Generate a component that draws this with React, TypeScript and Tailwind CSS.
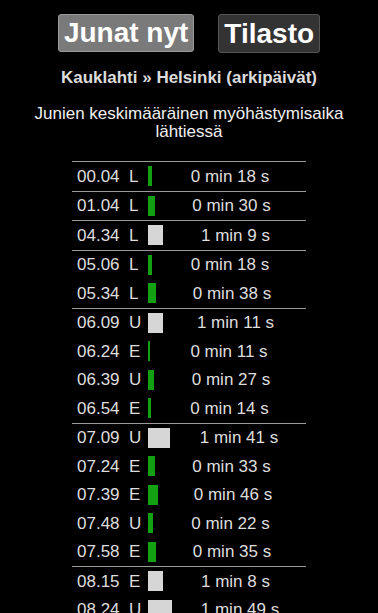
import React from "react";

type Row = { time: string; kind: string; sec: number };

const rows: Row[] = [
  { time: "00.04", kind: "L", sec: 18 },
  { time: "01.04", kind: "L", sec: 30 },
  { time: "04.34", kind: "L", sec: 69 },
  { time: "05.06", kind: "L", sec: 18 },
  { time: "05.34", kind: "L", sec: 38 },
  { time: "06.09", kind: "U", sec: 71 },
  { time: "06.24", kind: "E", sec: 11 },
  { time: "06.39", kind: "U", sec: 27 },
  { time: "06.54", kind: "E", sec: 14 },
  { time: "07.09", kind: "U", sec: 101 },
  { time: "07.24", kind: "E", sec: 33 },
  { time: "07.39", kind: "E", sec: 46 },
  { time: "07.48", kind: "U", sec: 22 },
  { time: "07.58", kind: "E", sec: 35 },
  { time: "08.15", kind: "E", sec: 68 },
  { time: "08.24", kind: "U", sec: 109 },
];

function fmt(sec: number) {
  return `${Math.floor(sec / 60)} min ${sec % 60} s`;
}

export default function App() {
  return (
    <div
      className="min-h-[613px] w-full bg-black text-[#dedede]"
      style={{ fontFamily: '"Liberation Sans", Arial, sans-serif' }}
    >
      <div className="flex justify-center gap-[24px] pt-[14px]">
        <button className="h-[38px] rounded-[3px] border border-[#9a9a9a] bg-[#7a7a7a] px-[5px] text-[28px] font-bold leading-none text-white">
          Junat nyt
        </button>
        <button className="h-[39px] rounded-[3px] border border-[#555] bg-[#333] px-[5px] text-[28px] font-bold leading-none text-white">
          Tilasto
        </button>
      </div>

      <h2 className="mt-[15px] text-center text-[17px] font-bold leading-[20px] text-[#dcdcdc]">
        Kauklahti » Helsinki (arkipäivät)
      </h2>

      <p className="mt-[17px] px-2 text-center text-[17px] leading-[18px] text-[#f0f0f0]">
        Junien keskimääräinen myöhästymisaika lähtiessä
      </p>

      <div className="mx-auto mt-[20px] w-[234px]">
        {rows.map((r, i) => {
          const newHour = i === 0 || rows[i - 1].time.slice(0, 2) !== r.time.slice(0, 2);
          const w = Math.max(2, Math.round(r.sec / 4.6));
          return (
            <div
              key={r.time}
              className={`box-content flex h-[28.5px] items-center text-[17px] ${
                newHour ? "border-t border-[#9a9a9a]" : ""
              }`}
            >
              <span className="w-[57px] pl-[5px]">{r.time}</span>
              <span className="w-[19px]">{r.kind}</span>
              <span
                className={`h-[20px] ${r.sec >= 60 ? "bg-[#d6d6d6]" : "bg-[#13a013]"}`}
                style={{ width: w }}
              />
              <span className="flex-1 pl-[2px] text-center">{fmt(r.sec)}</span>
            </div>
          );
        })}
      </div>
    </div>
  );
}
